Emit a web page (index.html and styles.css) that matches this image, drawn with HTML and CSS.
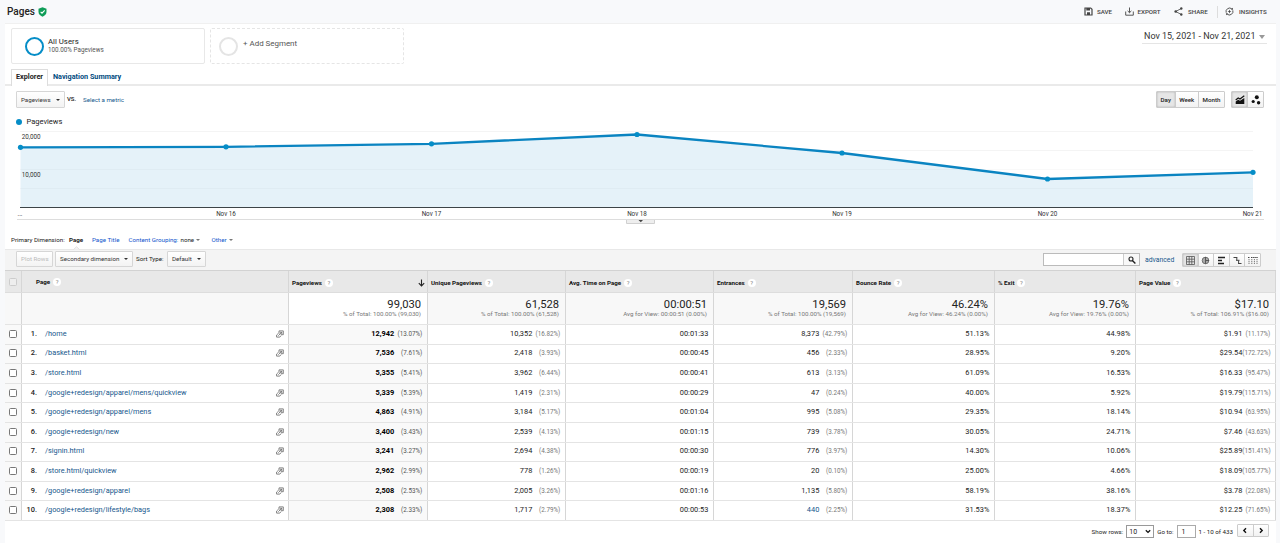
FILE: index.html
```html
<!DOCTYPE html>
<html lang="en">
<head>
<meta charset="utf-8">
<title>Pages</title>
<link rel="stylesheet" href="styles.css">
</head>
<body>
<svg class="defs" width="0" height="0">
  <symbol id="open" viewBox="0 0 8 8"><path d="M3 3.800V.9h4.300v3.800H4.700" fill="none" stroke="#666" stroke-width=".8"/><path d="M2.300 3.400 .6 5v2.100h3.200l1.300-1.500M2.300 5.700 5.700 2.400M4 2.300h1.800v1.800" fill="none" stroke="#666" stroke-width=".8"/></symbol>
</svg>
<header class="topbar">
  <h1 class="title">Pages</h1>
  <svg class="shield" width="9" height="10" viewBox="0 0 9 10"><path d="M4.500.3 8.500 1.800v3c0 2.400-1.600 4-4 4.900C2.100 8.800.5 7.200.5 4.800v-3z" fill="#0f9d58"/><path d="M2.600 4.900 4 6.200 6.700 3.400" fill="none" stroke="#fff" stroke-width="1.100"/></svg>
  <nav class="actions">
    <span class="action save"><svg width="9" height="9" viewBox="0 0 9 9"><path d="M1 1h5.700L8 2.300V8H1z" fill="none" stroke="#444" stroke-width="1.200"/><path d="M2.300 1h3.700v2.400H2.300zM3 5.200h3V8H3z" fill="#444"/></svg>SAVE</span>
    <span class="action export"><svg width="9" height="9" viewBox="0 0 9 9"><path d="M.7 4.500v3.700h7.600V4.500M4.500.5v5M2.600 3.900l1.900 1.800 1.900-1.800" fill="none" stroke="#444" stroke-width=".9"/></svg>EXPORT</span>
    <span class="action share"><svg width="9" height="9" viewBox="0 0 9 9"><path d="M7.300 1.500 1.700 4.500l5.600 3" fill="none" stroke="#444" stroke-width=".8"/><circle cx="7.300" cy="1.500" r="1.200" fill="#444"/><circle cx="1.700" cy="4.500" r="1.300" fill="#444"/><circle cx="7.300" cy="7.500" r="1.200" fill="#444"/></svg>SHARE</span>
    <span class="action insights"><svg width="9" height="9" viewBox="0 0 10 10"><path d="M1.300 6.300A4 4 0 0 1 7.600 2M8.700 3.700A4 4 0 0 1 2.400 8" fill="none" stroke="#444" stroke-width="1"/><path d="M6.500 2.800 9 3.100 8.600.7zM3.500 7.200 1 6.900l.4 2.400zM5 2.900l.6 1.500L7.100 5l-1.500.6L5 7.100l-.6-1.500L2.900 5l1.500-.6z" fill="#444"/></svg>INSIGHTS</span>
  </nav>
</header>
<main class="panel">
  <section class="segments">
    <div class="segment"><span class="ring"></span><div class="segment-text"><span class="segment-name">All Users</span><span class="segment-sub">100.00% Pageviews</span></div></div>
    <div class="segment add"><span class="ring"></span><span class="add-label">+ Add Segment</span></div>
    <div class="date">Nov 15, 2021 - Nov 21, 2021<span class="date-arrow"></span></div>
  </section>
  <nav class="tabs"><span class="tab active">Explorer</span><span class="tab">Navigation Summary</span></nav>
  <section class="controls">
    <span class="button metric">Pageviews<span class="caret"></span></span><span class="vs">VS.</span><span class="select-metric">Select a metric</span>
    <div class="group periods"><span class="on">Day</span><span>Week</span><span>Month</span></div>
    <div class="group kinds"><span class="on"><svg width="10" height="10" viewBox="0 0 10 10"><path d="M.7 9V6.500l2.500-1.700 1.800 1L9.300 3v6z" fill="#111"/><path d="M.7 5 3.200 3l1.800 1L9.300.8" fill="none" stroke="#111" stroke-width="1.200"/></svg></span><span><svg width="10" height="10" viewBox="0 0 10 10"><circle cx="5.800" cy="2.300" r="2" fill="#111"/><circle cx="2.200" cy="6.500" r="1.600" fill="#111"/><circle cx="7.600" cy="7.700" r="1.700" fill="#111"/></svg></span></div>
  </section>
  <div class="legend"><span class="dot"></span>Pageviews</div>
  <svg class="chart" width="1271" height="98" viewBox="5 130 1271 98">
    <path d="M20 131.500H1253M20 150.500H1253" stroke="#f4f4f4"/>
    <path d="M20.500 147.300 226 146.800 431.500 143.800 637 134.500 842 153 1047.500 179 1253 172.300V207H20.500z" fill="#e5f2f9"/>
    <path d="M20 169.500H1253M20 188.500H1253" stroke="#000" stroke-opacity=".025"/>
    <path d="M20 207.500H1253" stroke="#3c4447"/>
    <path d="M20.500 147.300 226 146.800 431.500 143.800 637 134.500 842 153 1047.500 179 1253 172.300" fill="none" stroke="#0a84c1" stroke-width="2.300"/>
    <g fill="#058dc7"><circle cx="20.500" cy="147.300" r="2.600"/><circle cx="226" cy="146.800" r="2.600"/><circle cx="431.500" cy="143.800" r="2.600"/><circle cx="637" cy="134.500" r="2.600"/><circle cx="842" cy="153" r="2.600"/><circle cx="1047.500" cy="179" r="2.600"/><circle cx="1253" cy="172.300" r="2.600"/></g>
    <g class="axis"><text x="21.700" y="139">20,000</text><text x="21.700" y="176.500">10,000</text><text x="17.500" y="215.500">...</text>
    <g text-anchor="middle"><text x="226" y="215.500">Nov 16</text><text x="431.500" y="215.500">Nov 17</text><text x="637" y="215.500">Nov 18</text><text x="842" y="215.500">Nov 19</text><text x="1047.500" y="215.500">Nov 20</text><text x="1252.500" y="215.500">Nov 21</text></g></g>
    <path d="M626.500 219v4.500h28V219" fill="#eee" stroke="#d0d0d0"/><path d="M17 219.500H1264" stroke="#ddd"/><path d="M638.500 220h4.500l-2.200 2.200z" fill="#444"/>
  </svg>
  <nav class="dimensions"><span class="dim-label">Primary Dimension:</span><b class="dim-page">Page</b><a class="dim-title">Page Title</a><a class="dim-group">Content Grouping:</a><span class="dim-none">none<i class="chev"></i></span><a class="dim-other">Other<i class="chev"></i></a></nav>
  <section class="toolbar">
    <svg class="notch" width="7" height="4" viewBox="0 0 7 4"><path d="M.5 3.500 3.500.7l3 2.800" fill="#f4f4f4" stroke="#ddd" stroke-width=".8"/></svg>
    <span class="button plot">Plot Rows</span><span class="button secondary">Secondary dimension<span class="caret"></span></span><span class="sort">Sort Type:</span><span class="button default">Default<span class="caret"></span></span>
    <div class="search"><span class="search-field"></span><span class="search-button"><svg width="8" height="8" viewBox="0 0 8 8"><circle cx="3" cy="3" r="2" fill="none" stroke="#222" stroke-width="1.100"/><path d="m4.400 4.400 3 3" stroke="#222" stroke-width="1.400"/></svg></span></div>
    <a class="advanced">advanced</a>
    <div class="group views">
      <span class="on"><svg width="9" height="9" viewBox="0 0 9 9"><path d="M.5.500h8v8h-8zM.5 3.200h8M.5 5.800h8M3.200.5v8M5.800.5v8" fill="none" stroke="#555" stroke-width=".8"/></svg></span>
      <span><svg width="9" height="9" viewBox="0 0 9 9"><circle cx="4.500" cy="4.500" r="3.300" fill="#aaa" stroke="#666" stroke-width=".9"/><path d="M4.500 1v3.500H8M4.500 4.500v3.300" fill="none" stroke="#444" stroke-width=".8"/></svg></span>
      <span><svg width="9" height="9" viewBox="0 0 9 9"><path d="M1 1.500h7M1 4.500h4M1 7.500h6" stroke="#222" stroke-width="1.300"/></svg></span>
      <span><svg width="9" height="9" viewBox="0 0 9 9"><path d="M.5 1.500h3.800M3 4.300h3.500M5 7.500h3.500M3.800 1.500v2.800M5.600 4.500v3" stroke="#444" stroke-width="1"/></svg></span>
      <span><svg width="10" height="9" viewBox="0 0 10 9"><path d="M0 1.500h2M3 1.500h7" stroke="#444" stroke-width="1.200" stroke-dasharray="1.500 .6"/><path d="M1 3v5M3.800 3v5M6.400 3v5M9 3v5" stroke="#666" stroke-width=".9" stroke-dasharray="1.200 .7"/></svg></span>
    </div>
  </section>
  <section class="table">
    <div class="row head">
      <div class="check"><span class="box"></span></div>
      <div class="page">Page<i class="help">?</i></div>
      <div>Pageviews<i class="help">?</i><svg class="arrow" width="7" height="8" viewBox="0 0 7 8"><path d="M3.500.5v6.300M.8 4.200l2.700 2.700 2.700-2.700" fill="none" stroke="#222" stroke-width="1.100"/></svg></div>
      <div>Unique Pageviews<i class="help">?</i></div>
      <div>Avg. Time on Page<i class="help">?</i></div>
      <div>Entrances<i class="help">?</i></div>
      <div>Bounce Rate<i class="help">?</i></div>
      <div>% Exit<i class="help">?</i></div>
      <div>Page Value<i class="help">?</i></div>
    </div>
    <div class="row totals">
      <div></div><div></div>
      <div class="sorted"><strong>99,030</strong><small>% of Total: 100.00% (99,030)</small></div>
      <div><strong>61,528</strong><small>% of Total: 100.00% (61,528)</small></div>
      <div><strong>00:00:51</strong><small>Avg for View: 00:00:51 (0.00%)</small></div>
      <div><strong>19,569</strong><small>% of Total: 100.00% (19,569)</small></div>
      <div><strong>46.24%</strong><small>Avg for View: 46.24% (0.00%)</small></div>
      <div><strong>19.76%</strong><small>Avg for View: 19.76% (0.00%)</small></div>
      <div><strong>$17.10</strong><small>% of Total: 106.91% ($16.00)</small></div>
    </div>
    <div class="row data"><div class="check"><span class="box"></span></div><div class="page"><b>1.</b><a>/home</a><svg><use href="#open"/></svg></div><div class="sorted">12,942<i>(13.07%)</i></div><div>10,352<i>(16.82%)</i></div><div>00:01:33</div><div>8,373<i>(42.79%)</i></div><div>51.13%</div><div>44.98%</div><div>$1.91<i>(11.17%)</i></div></div>
    <div class="row data"><div class="check"><span class="box"></span></div><div class="page"><b>2.</b><a>/basket.html</a><svg><use href="#open"/></svg></div><div class="sorted">7,536<i>(7.61%)</i></div><div>2,418<i>(3.93%)</i></div><div>00:00:45</div><div>456<i>(2.33%)</i></div><div>28.95%</div><div>9.20%</div><div>$29.54<i>(172.72%)</i></div></div>
    <div class="row data"><div class="check"><span class="box"></span></div><div class="page"><b>3.</b><a>/store.html</a><svg><use href="#open"/></svg></div><div class="sorted">5,355<i>(5.41%)</i></div><div>3,962<i>(6.44%)</i></div><div>00:00:41</div><div>613<i>(3.13%)</i></div><div>61.09%</div><div>16.53%</div><div>$16.33<i>(95.47%)</i></div></div>
    <div class="row data"><div class="check"><span class="box"></span></div><div class="page"><b>4.</b><a>/google+redesign/apparel/mens/quickview</a><svg><use href="#open"/></svg></div><div class="sorted">5,339<i>(5.39%)</i></div><div>1,419<i>(2.31%)</i></div><div>00:00:29</div><div>47<i>(0.24%)</i></div><div>40.00%</div><div>5.92%</div><div>$19.79<i>(115.71%)</i></div></div>
    <div class="row data"><div class="check"><span class="box"></span></div><div class="page"><b>5.</b><a>/google+redesign/apparel/mens</a><svg><use href="#open"/></svg></div><div class="sorted">4,863<i>(4.91%)</i></div><div>3,184<i>(5.17%)</i></div><div>00:01:04</div><div>995<i>(5.08%)</i></div><div>29.35%</div><div>18.14%</div><div>$10.94<i>(63.95%)</i></div></div>
    <div class="row data"><div class="check"><span class="box"></span></div><div class="page"><b>6.</b><a>/google+redesign/new</a><svg><use href="#open"/></svg></div><div class="sorted">3,400<i>(3.43%)</i></div><div>2,539<i>(4.13%)</i></div><div>00:01:15</div><div>739<i>(3.78%)</i></div><div>30.05%</div><div>24.71%</div><div>$7.46<i>(43.63%)</i></div></div>
    <div class="row data"><div class="check"><span class="box"></span></div><div class="page"><b>7.</b><a>/signin.html</a><svg><use href="#open"/></svg></div><div class="sorted">3,241<i>(3.27%)</i></div><div>2,694<i>(4.38%)</i></div><div>00:00:30</div><div>776<i>(3.97%)</i></div><div>14.30%</div><div>10.06%</div><div>$25.89<i>(151.41%)</i></div></div>
    <div class="row data"><div class="check"><span class="box"></span></div><div class="page"><b>8.</b><a>/store.html/quickview</a><svg><use href="#open"/></svg></div><div class="sorted">2,962<i>(2.99%)</i></div><div>778<i>(1.26%)</i></div><div>00:00:19</div><div>20<i>(0.10%)</i></div><div>25.00%</div><div>4.66%</div><div>$18.09<i>(105.77%)</i></div></div>
    <div class="row data"><div class="check"><span class="box"></span></div><div class="page"><b>9.</b><a>/google+redesign/apparel</a><svg><use href="#open"/></svg></div><div class="sorted">2,508<i>(2.53%)</i></div><div>2,005<i>(3.26%)</i></div><div>00:01:16</div><div>1,135<i>(5.80%)</i></div><div>58.19%</div><div>38.16%</div><div>$3.78<i>(22.08%)</i></div></div>
    <div class="row data"><div class="check"><span class="box"></span></div><div class="page"><b>10.</b><a>/google+redesign/lifestyle/bags</a><svg><use href="#open"/></svg></div><div class="sorted">2,308<i>(2.33%)</i></div><div>1,717<i>(2.79%)</i></div><div>00:00:53</div><div class="linked">440<i>(2.25%)</i></div><div>31.53%</div><div>18.37%</div><div>$12.25<i>(71.65%)</i></div></div>
  </section>
  <footer class="pager">
    <span>Show rows:</span><span class="rows">10<svg width="6" height="5" viewBox="0 0 6 5"><path d="m.8 1.200 2.200 2.200 2.200-2.200" fill="none" stroke="#111" stroke-width="1.300"/></svg></span><span class="goto">Go to:</span><span class="number">1</span><span class="range">1 - 10 of 433</span>
    <div class="group steps"><span><svg width="6" height="7" viewBox="0 0 6 7"><path d="M4 1.200 1.800 3.500 4 5.800" fill="none" stroke="#111" stroke-width="1.400"/></svg></span><span><svg width="6" height="7" viewBox="0 0 6 7"><path d="m2 1.200 2.200 2.300L2 5.800" fill="none" stroke="#111" stroke-width="1.400"/></svg></span></div>
  </footer>
</main>
</body>
</html>
```

FILE: styles.css
```css
* { box-sizing: border-box; }
body { margin: 0; height: 543px; overflow: hidden; background: #f8f9fb; color: #222; font: 6.2px/8px Roboto, "Liberation Sans", sans-serif; white-space: nowrap; }
.defs { display: block; height: 0; }
svg { display: block; flex: none; }
a { color: #15c; }
i { font-style: normal; }

.topbar { height: 23px; display: flex; align-items: center; padding: 0 11px 0 7px; }
.title { margin: 0; width: 31px; font-size: 10px; line-height: 12px; font-weight: 500; }
.actions { margin-left: auto; display: flex; color: #444; font-weight: 500; }
.action { display: flex; align-items: center; height: 12px; gap: 4px; }
.save { width: 41px; }
.export { width: 49px; gap: 3.5px; }
.share { width: 43px; gap: 5px; }
.insights { width: 52px; border-left: 1px solid #ddd; padding-left: 7px; gap: 5px; }

.panel { margin: 0 4px 0 5px; height: 520px; background: #fff; border-top: 1px solid #f0f0f0; }
.segments { display: flex; height: 45px; padding: 4px 9px 0 6px; gap: 5px; }
.segment { display: flex; width: 194px; height: 36px; padding: 8px 0 0 13px; border: 1px solid #e8e8e8; border-radius: 2px; gap: 4px; }
.segment.add { border: 1px dashed #e5e5e5; padding-left: 8px; gap: 5px; }
.ring { flex: none; width: 19px; height: 19px; border: 2px solid #058dc7; border-radius: 50%; }
.add .ring { border-color: #e4e4e4; }
.segment-text { display: flex; flex-direction: column; }
.segment-name { font-size: 7.8px; line-height: 9px; }
.segment-sub { font-size: 6.3px; line-height: 9px; color: #555; }
.add-label { padding-top: 2px; font-size: 7.95px; line-height: 9px; color: #555; }
.date { margin: 0 0 0 auto; width: 125px; height: 16px; padding: 3px 0 0 2px; font-size: 8.98px; line-height: 10px; border-bottom: 1px solid #e5e5e5; display: flex; gap: 4px; color: #333; }
.date-arrow { margin-top: 4px; border: 3px solid transparent; border-top: 4px solid #999; border-bottom: 0; }
.tabs { display: flex; height: 17px; border-bottom: 2px solid #eaeaea; padding-left: 6px; font-size: 7.25px; font-weight: 700; }
.tab { height: 15px; padding: 4px 5px 0; color: #004b80; }
.tab.active { height: 17px; width: 37px; padding: 3px 0 0 4px; color: #222; background: #fff; border: 1px solid #ddd; border-bottom: 0; }

.controls { display: flex; height: 29px; padding: 5px 12px 0 11px; }
.button { display: flex; align-items: center; height: 17px; border: 1px solid #d6d6d6; border-radius: 1px; background: linear-gradient(#fff, #f3f3f3); padding: 0 4px; color: #333; }
.caret { margin-left: auto; border: 2.2px solid transparent; border-top: 2.8px solid #333; border-bottom: 0; }
.metric { width: 49px; }
.vs { margin: 4px 0 0 2px; width: 16px; font-size: 6px; font-weight: 500; }
.select-metric { margin-top: 5px; color: #15578c; }
.group { display: flex; height: 17px; border: 1px solid #ccc; border-radius: 1px; background: linear-gradient(#fff, #f2f2f2); }
.group span { display: flex; align-items: center; justify-content: center; }
.group span + span { border-left: 1px solid #ccc; }
.group .on { background: #e6e6e6; box-shadow: inset 0 0 2px #aaa; }
.periods { margin-left: auto; width: 69px; font-weight: 500; }
.periods span { flex: 1 1 auto; }
.kinds { margin-left: 6px; width: 33px; }
.kinds span { flex: 1; }
.legend { display: flex; align-items: center; height: 15px; padding: 0 0 1px 11px; gap: 4.5px; font-size: 7.5px; }
.dot { width: 6px; height: 6px; border-radius: 50%; background: #058dc7; }
.axis { font-size: 6.3px; fill: #333; }

.dimensions { display: flex; height: 21px; padding: 8px 0 0 6px; }
.dim-label { width: 58px; }
.dim-page { width: 23px; }
.dim-title { width: 36.5px; }
.dim-group { width: 52px; }
.dim-none { width: 31px; }
.chev { display: inline-block; margin-left: 2px; border: 2px solid transparent; border-top: 2px solid #777; border-bottom: 0; vertical-align: 1px; }
.toolbar { position: relative; display: flex; height: 21px; padding: 1px 15px 0 11px; background: #f4f4f4; border-top: 1px solid #e8e8e8; }
.notch { position: absolute; left: 68px; top: -4px; }
.toolbar .button { height: 16px; }
.plot { width: 37px; color: #bbb; }
.secondary { margin-left: 2px; width: 78px; }
.sort { margin: 4px 0 0 3px; width: 31px; }
.default { width: 39px; }
.search { display: flex; margin: 2px 0 0 auto; width: 97px; height: 13px; border: 1px solid #bbb; background: #fff; }
.search-field { flex: 1; }
.search-button { display: flex; align-items: center; justify-content: center; width: 16px; border-left: 1px solid #ccc; background: #f8f8f8; }
.advanced { margin: 5px 0 0 5px; width: 37px; font-size: 6.8px; color: #15578c; }
.views { margin-top: 2px; width: 79px; height: 14px; }
.views span { flex: 1; }

.row { display: grid; grid-template-columns: 17px 267px 139px 138px 148px 139px 142px 141px 140px; border-bottom: 1px solid #e4e4e4; }
.row > div { border-right: 1px solid #d6d6d6; }
.head { height: 23px; background: #e8e8e8; border-top: 1px solid #d2d2d2; border-bottom-color: #ddd; font-weight: 700; color: #111; }
.head > div { display: flex; align-items: center; padding: 2px 2px 0 3px; }
.head .check { padding: 0; }
.head .page { padding: 0 0 0 14px; }
.help { width: 8px; height: 8px; margin-left: 3px; border-radius: 50%; background: #fff; color: #888; font-size: 6px; line-height: 8px; font-weight: 400; text-align: center; }
.arrow { margin-left: auto; }
.check { display: flex; align-items: center; justify-content: center; }
.box { width: 8px; height: 8px; border: 1px solid #777; border-radius: 1.5px; background: #fff; }
.head .box { border-color: #ccc; background: #eee; }
.totals { height: 32px; background: #f8f8f8; }
.totals > div { display: flex; flex-direction: column; align-items: flex-end; padding: 6px 6px 0 0; }
.totals .sorted { background: #fff; }
strong { font-size: 11.2px; line-height: 12px; font-weight: 400; }
small { font-size: 6.2px; line-height: 7px; color: #777; }
.data { height: 19.62px; font-size: 7.4px; }
.data > div { display: flex; align-items: center; justify-content: flex-end; padding: 0 4.7px 1px 0; }
.data i { width: 28px; text-align: right; font-size: 6.3px; color: #777; }
.data .check { justify-content: center; padding: 0 0 1px; background: #f9f9f9; }
.data .page { justify-content: flex-start; padding-right: 4px; }
.page b { width: 15px; text-align: right; font-weight: 500; }
.page a { margin-left: 8px; font-size: 7.35px; color: #15578c; }
.page svg { margin-left: auto; width: 8px; height: 8px; }
.data .sorted { background: #f9f9f9; font-weight: 700; color: #000; }
.data .sorted i { font-weight: 400; color: #555; }
.data .linked { color: #15578c; }

.pager { display: flex; justify-content: flex-end; align-items: center; height: 21px; padding-right: 7px; }
.rows, .number { display: flex; align-items: center; height: 13px; border: 1px solid #999; background: #fff; padding: 0 2px; font-size: 7px; }
.rows { width: 28px; margin: 0 3px; justify-content: space-between; }
.number { width: 19px; margin: 0 3px; padding-left: 4px; border-color: #aaa; }
.steps { margin: -2px 0 0 4px; width: 32px; height: 13px; }
.steps span { flex: 1; }
```
